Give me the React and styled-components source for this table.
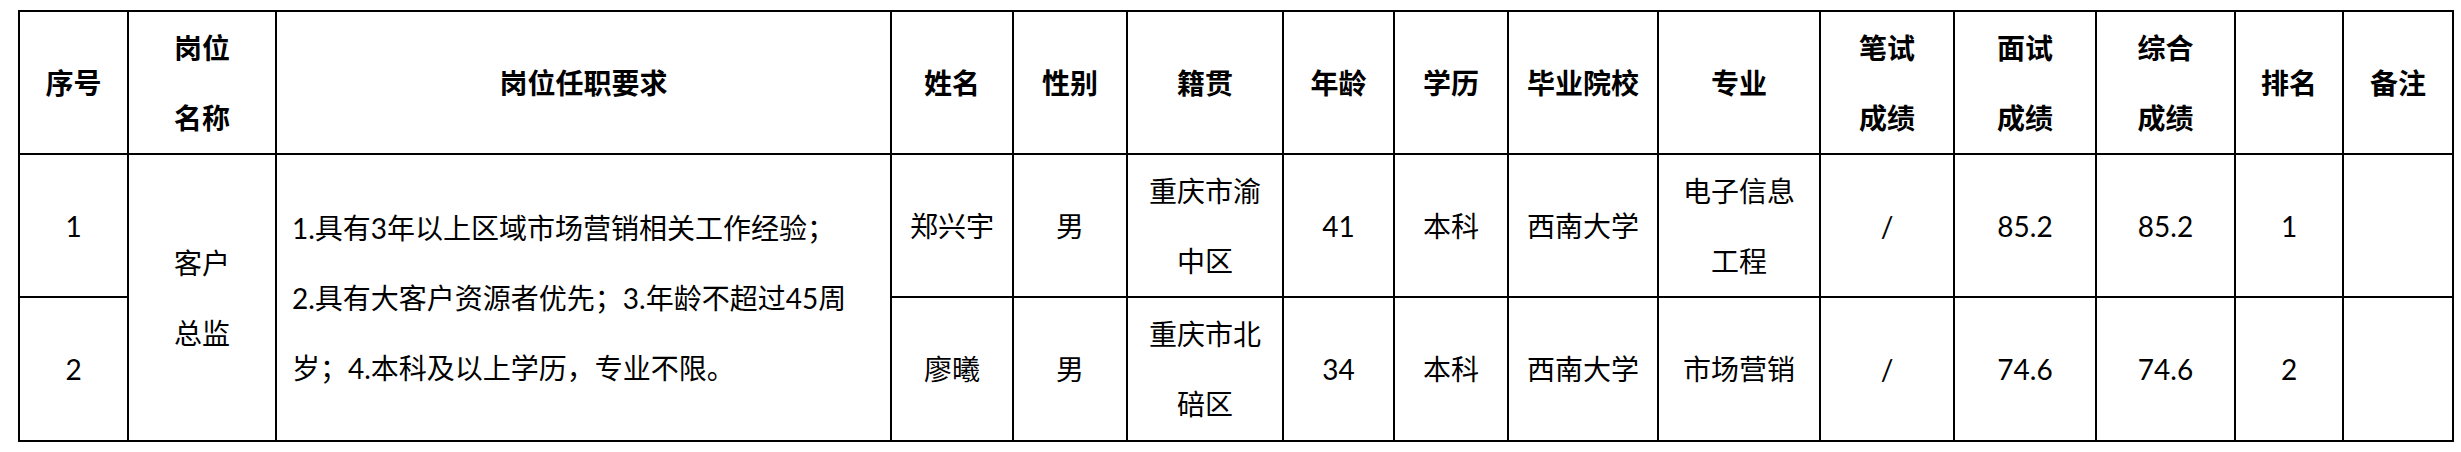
import React from 'react';
import styled, { createGlobalStyle } from 'styled-components';

const GlobalStyle = createGlobalStyle`
  html, body {
    margin: 0;
    padding: 0;
    background: #fff;
  }
`;

const Page = styled.div`
  padding: 10px 0 0 18px;
  font-family: "Lato", "Noto Sans CJK SC", sans-serif;
  color: #000;
`;

const Table = styled.table`
  border-collapse: collapse;
  table-layout: fixed;
  width: 2436px;
`;

const Row = styled.tr`
  height: ${p => p.$h}px;
`;

const Cell = styled.td`
  border: 2px solid #000;
  padding: ${p => (p.$left ? '0 10px 0 15px' : '0')};
  text-align: ${p => (p.$left ? 'left' : 'center')};
  vertical-align: middle;
  font-size: 28px;
  line-height: 70px;
  font-weight: ${p => (p.$head ? 700 : 400)};
  white-space: nowrap;
`;

const cols = [109, 148, 615, 122, 114, 156, 111, 114, 150, 162, 134, 142, 139, 108, 110];

const headers = [
  ['序号'],
  ['岗位', '名称'],
  ['岗位任职要求'],
  ['姓名'],
  ['性别'],
  ['籍贯'],
  ['年龄'],
  ['学历'],
  ['毕业院校'],
  ['专业'],
  ['笔试', '成绩'],
  ['面试', '成绩'],
  ['综合', '成绩'],
  ['排名'],
  ['备注'],
];

const people = [
  {
    no: '1',
    name: '郑兴宇',
    sex: '男',
    origin: ['重庆市渝', '中区'],
    age: '41',
    edu: '本科',
    school: '西南大学',
    major: ['电子信息', '工程'],
    written: '/',
    interview: '85.2',
    total: '85.2',
    rank: '1',
  },
  {
    no: '2',
    name: '廖曦',
    sex: '男',
    origin: ['重庆市北', '碚区'],
    age: '34',
    edu: '本科',
    school: '西南大学',
    major: ['市场营销'],
    written: '/',
    interview: '74.6',
    total: '74.6',
    rank: '2',
  },
];

const requirement = [
  '1.具有3年以上区域市场营销相关工作经验；',
  '2.具有大客户资源者优先；3.年龄不超过45周',
  '岁；4.本科及以上学历，专业不限。',
];

const Lines = ({ items }) =>
  items.map((t, i) => (
    <React.Fragment key={i}>
      {i > 0 && <br />}
      {t}
    </React.Fragment>
  ));

const App = () => {
  return (
    <Page>
      <GlobalStyle />
      <Table>
        <colgroup>
          {cols.map((w, i) => (
            <col key={i} style={{ width: w }} />
          ))}
        </colgroup>
        <tbody>
          <Row $h={143}>
            {headers.map((h, i) => (
              <Cell key={i} $head>
                <Lines items={h} />
              </Cell>
            ))}
          </Row>
          {people.map((p, i) => (
            <Row key={p.no} $h={i === 0 ? 143 : 144}>
              <Cell>{p.no}</Cell>
              {i === 0 && (
                <>
                  <Cell rowSpan={2}>
                    <Lines items={['客户', '总监']} />
                  </Cell>
                  <Cell rowSpan={2} $left>
                    <Lines items={requirement} />
                  </Cell>
                </>
              )}
              <Cell>{p.name}</Cell>
              <Cell>{p.sex}</Cell>
              <Cell>
                <Lines items={p.origin} />
              </Cell>
              <Cell>{p.age}</Cell>
              <Cell>{p.edu}</Cell>
              <Cell>{p.school}</Cell>
              <Cell>
                <Lines items={p.major} />
              </Cell>
              <Cell>{p.written}</Cell>
              <Cell>{p.interview}</Cell>
              <Cell>{p.total}</Cell>
              <Cell>{p.rank}</Cell>
              <Cell />
            </Row>
          ))}
        </tbody>
      </Table>
    </Page>
  );
};

export default App;
